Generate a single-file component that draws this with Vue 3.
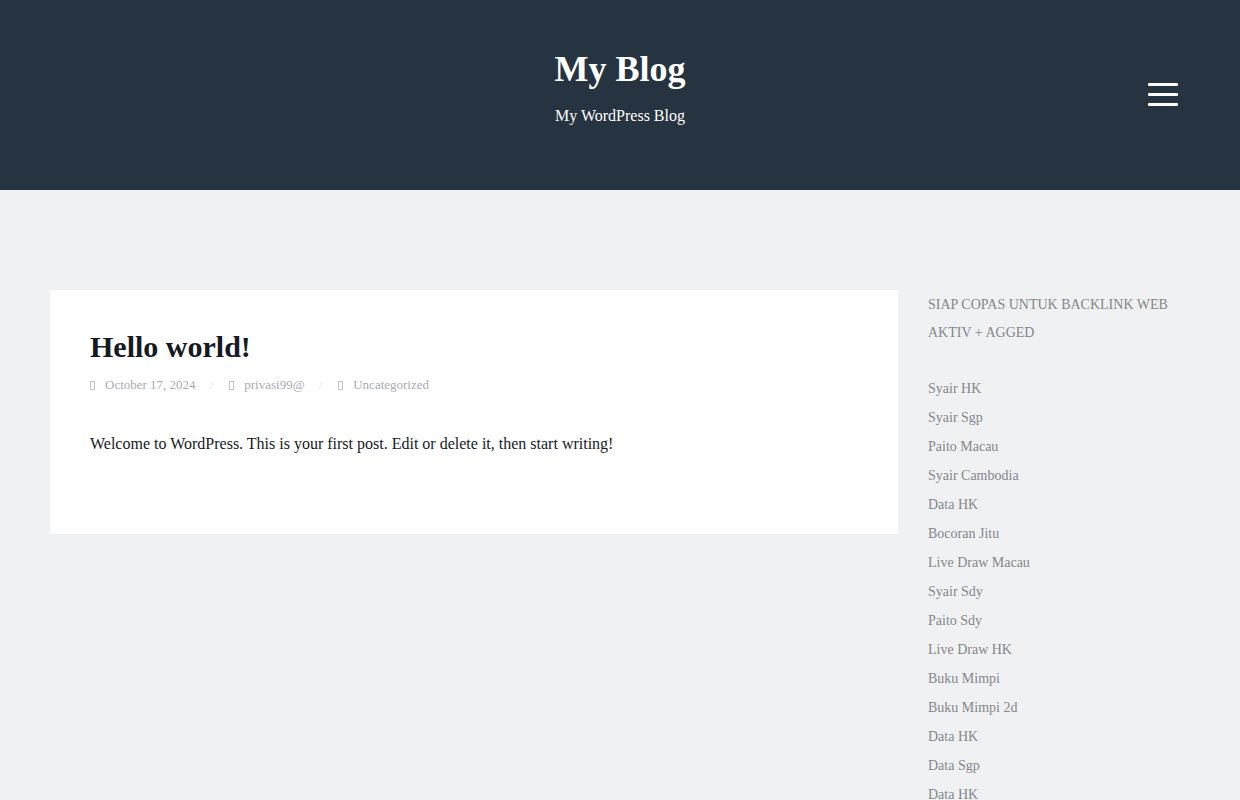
<script setup>
const meta = ['October 17, 2024', 'privasi99@', 'Uncategorized']

const links = [
  'Syair HK',
  'Syair Sgp',
  'Paito Macau',
  'Syair Cambodia',
  'Data HK',
  'Bocoran Jitu',
  'Live Draw Macau',
  'Syair Sdy',
  'Paito Sdy',
  'Live Draw HK',
  'Buku Mimpi',
  'Buku Mimpi 2d',
  'Data HK',
  'Data Sgp',
  'Data HK',
]
</script>

<template>
  <div class="page">
    <header class="site-header">
      <div class="branding">
        <h1 class="site-title"><a href="#">My Blog</a></h1>
        <p class="tagline">My WordPress Blog</p>
      </div>
      <button class="menu-toggle" type="button" aria-label="Menu">
        <span class="bar"></span>
        <span class="bar"></span>
        <span class="bar"></span>
      </button>
    </header>

    <div class="content">
      <main class="posts">
        <article class="post">
          <h2 class="post-title"><a href="#">Hello world!</a></h2>
          <ul class="meta">
            <li v-for="item in meta" :key="item" class="meta-item">
              <span class="meta-icon" aria-hidden="true"></span>
              <a href="#">{{ item }}</a>
            </li>
          </ul>
          <p class="post-text">Welcome to WordPress. This is your first post. Edit or delete it, then start writing!</p>
        </article>
      </main>

      <aside class="sidebar">
        <p class="sidebar-intro">SIAP COPAS UNTUK BACKLINK WEB AKTIV + AGGED</p>
        <ul class="link-list">
          <li v-for="(link, i) in links" :key="i"><a href="#">{{ link }}</a></li>
        </ul>
      </aside>
    </div>
  </div>
</template>

<style>
body {
  margin: 0;
  background: #f0f1f3;
}
</style>

<style scoped>
.page {
  min-height: 100vh;
  background: #f0f1f3;
  color: #16191f;
  font-family: "Liberation Serif", "Times New Roman", serif;
  font-size: 16px;
}

a {
  color: inherit;
  text-decoration: none;
}

h1,
h2,
p,
ul {
  margin: 0;
  padding: 0;
}

ul {
  list-style: none;
}

.site-header {
  display: grid;
  grid-template-columns: 1fr auto 1fr;
  align-items: center;
  padding: 48px 60px 58px;
  background: #263340;
  color: #fff;
}

.branding {
  grid-column: 2;
  text-align: center;
}

.site-title {
  font-size: 36px;
  line-height: 42px;
}

.tagline {
  margin-top: 10px;
  line-height: 32px;
}

.menu-toggle {
  justify-self: end;
  display: flex;
  flex-direction: column;
  gap: 7px;
  margin: 8px 0 0;
  padding: 2px;
  border: 0;
  background: none;
  cursor: pointer;
}

.bar {
  width: 30px;
  height: 3px;
  border-radius: 1px;
  background: #fff;
}

.content {
  display: flex;
  align-items: flex-start;
  gap: 30px;
  padding: 100px 50px;
}

.posts {
  flex: 1;
  min-width: 0;
}

.post {
  padding: 40px 40px 74px;
  background: #fff;
}

.post-title {
  font-size: 30px;
  line-height: 34px;
}

.meta {
  display: flex;
  flex-wrap: wrap;
  margin-top: 8px;
  color: #a9acb1;
  font-size: 13px;
  line-height: 26px;
}

.meta-item {
  display: flex;
  align-items: center;
}

.meta-item + .meta-item::before {
  content: "/";
  margin: 0 16px 0 14px;
  color: #e3e5e8;
}

.meta-icon {
  box-sizing: border-box;
  width: 5px;
  height: 9px;
  margin-right: 10px;
  border: 1px solid #c4c6ca;
}

.post-text {
  margin-top: 30px;
  line-height: 32px;
}

.sidebar {
  width: 262px;
  color: #84878b;
  font-size: 14px;
}

.sidebar-intro {
  padding-top: 1px;
  line-height: 28px;
}

.link-list {
  margin-top: 27px;
  line-height: 29px;
}
</style>
